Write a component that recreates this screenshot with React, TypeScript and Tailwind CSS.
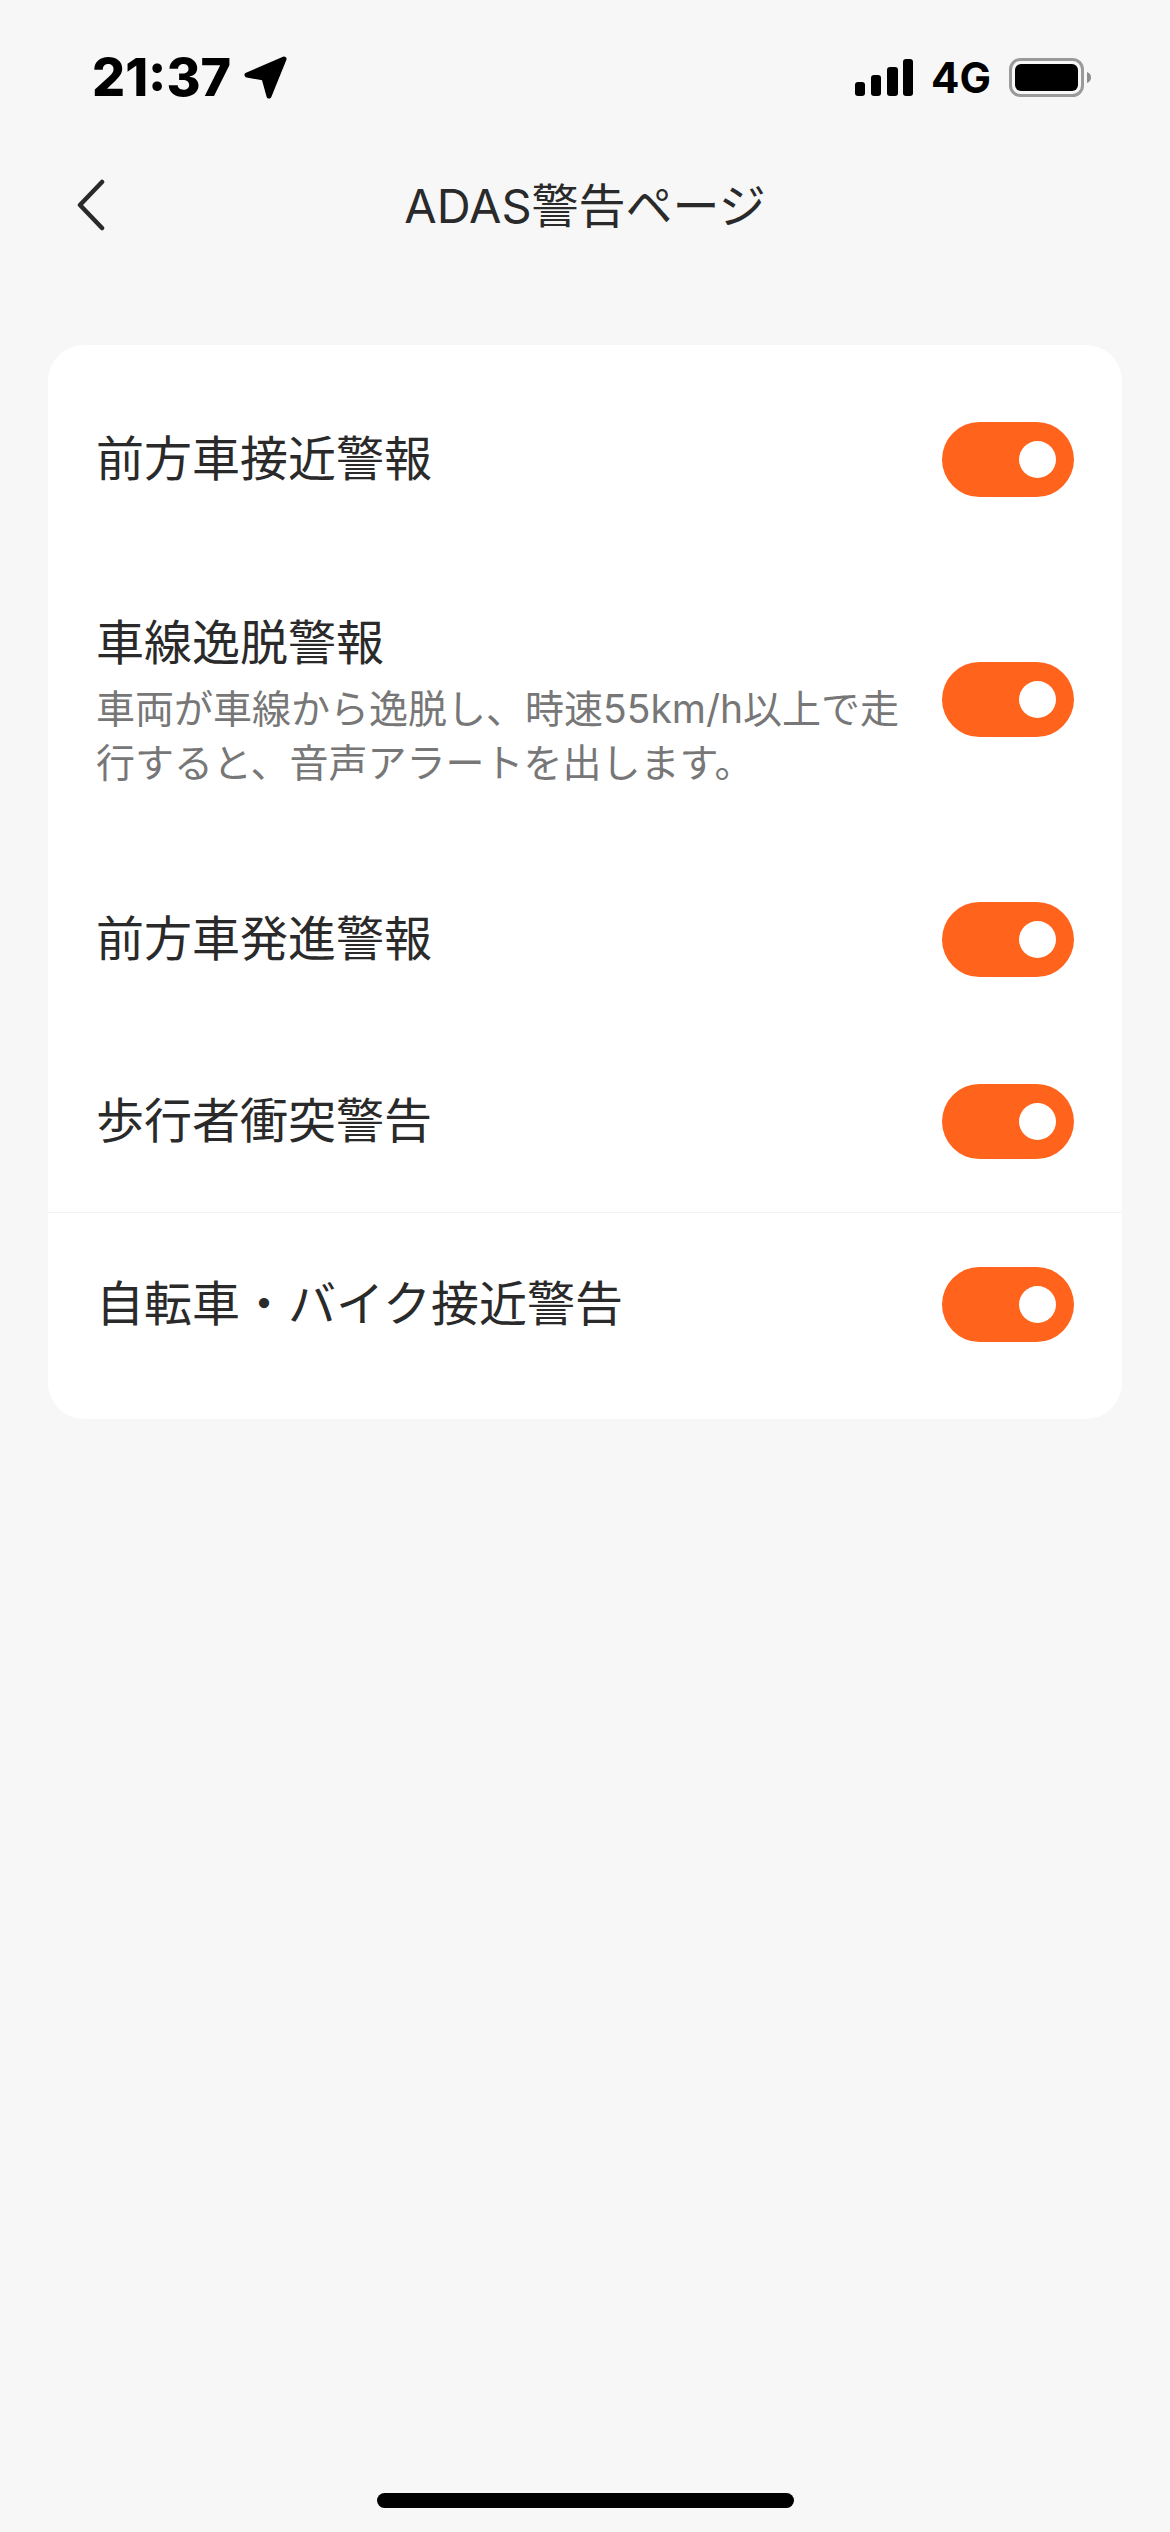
const JP = "font-['Inter','Noto_Sans_CJK_JP',sans-serif]";

function Toggle() {
  return (
    <div className="flex h-[75px] w-[132px] shrink-0 items-center justify-end rounded-full bg-[#ff631c] pr-[18px]">
      <div className="h-[37px] w-[37px] rounded-full bg-white" />
    </div>
  );
}

function Row({ label }: { label: string }) {
  return (
    <div className="flex h-[182px] items-center justify-between pl-[48px] pr-[48px]">
      <span className="text-[48px] leading-[64px] text-[#2a2a2a]">{label}</span>
      <Toggle />
    </div>
  );
}

export default function App() {
  return (
    <div className={`flex min-h-[2532px] w-[1170px] flex-col bg-[#f7f7f7] ${JP}`}>
      <div className="flex h-[150px] items-start justify-between pl-[92px] pr-[79px] pt-[50px]">
        <div className="flex items-center gap-[12px]">
          <span className="text-[52px] font-extrabold leading-[56px] text-black">21:37</span>
          <svg width="44" height="44" viewBox="0 0 44 44" className="mt-[-2px]">
            <path d="M41 4 L4 20 L21 23 L26 41 Z" fill="#000" stroke="#000" strokeWidth="5" strokeLinejoin="round" />
          </svg>
        </div>
        <div className="flex items-center pt-[8px]">
          <svg width="58" height="38" viewBox="0 0 58 38">
            <rect x="0" y="23" width="10" height="14" rx="3" fill="#000" />
            <rect x="16" y="16" width="10" height="21" rx="3" fill="#000" />
            <rect x="32" y="8" width="11" height="29" rx="3" fill="#000" />
            <rect x="48" y="0" width="10" height="37" rx="3" fill="#000" />
          </svg>
          <span className="ml-[18px] text-[42px] font-bold leading-[40px] text-black">4G</span>
          <svg width="82" height="40" viewBox="0 0 82 40" className="ml-[18px]">
            <rect x="1.5" y="1.5" width="72" height="36" rx="10" fill="none" stroke="#9a9a9a" strokeWidth="3" />
            <rect x="6" y="6" width="63" height="27" rx="6" fill="#000" />
            <path d="M78 14 C81 15 82 17 82 19.5 C82 22 81 24 78 25 Z" fill="#8e8e8e" />
          </svg>
        </div>
      </div>
      <div className="relative flex h-[110px] items-center justify-center">
        <svg width="34" height="52" viewBox="0 0 34 52" className="absolute left-[74px] top-[29px]">
          <path d="M28 3 L6 26 L28 49" fill="none" stroke="#2a2a2a" strokeWidth="4.5" strokeLinecap="round" strokeLinejoin="round" />
        </svg>
        <span className="pt-[2px] text-[47px] leading-[60px] text-[#2a2a2a]">ADAS警告ページ</span>
      </div>
      <div className="mx-[48px] mt-[85px] rounded-[36px] bg-white pb-[24px] pt-[23px]">
        <Row label="前方車接近警報" />
        <div className="flex h-[298px] items-center justify-between pl-[48px] pr-[48px]">
          <div className="w-[812px] pt-[2px]">
            <div className="text-[48px] leading-[64px] text-[#2a2a2a]">車線逸脱警報</div>
            <div className="mt-[7px] text-[39px] leading-[54px] text-[#777777]">
              車両が車線から逸脱し、時速55km/h以上で走行すると、音声アラートを出します。
            </div>
          </div>
          <Toggle />
        </div>
        <Row label="前方車発進警報" />
        <Row label="歩行者衝突警告" />
        <div className="h-px bg-[#f2f2f2]" />
        <Row label="自転車・バイク接近警告" />
      </div>
      <div className="mt-auto flex justify-center pb-[24px]">
        <div className="h-[15px] w-[417px] rounded-full bg-black" />
      </div>
    </div>
  );
}
